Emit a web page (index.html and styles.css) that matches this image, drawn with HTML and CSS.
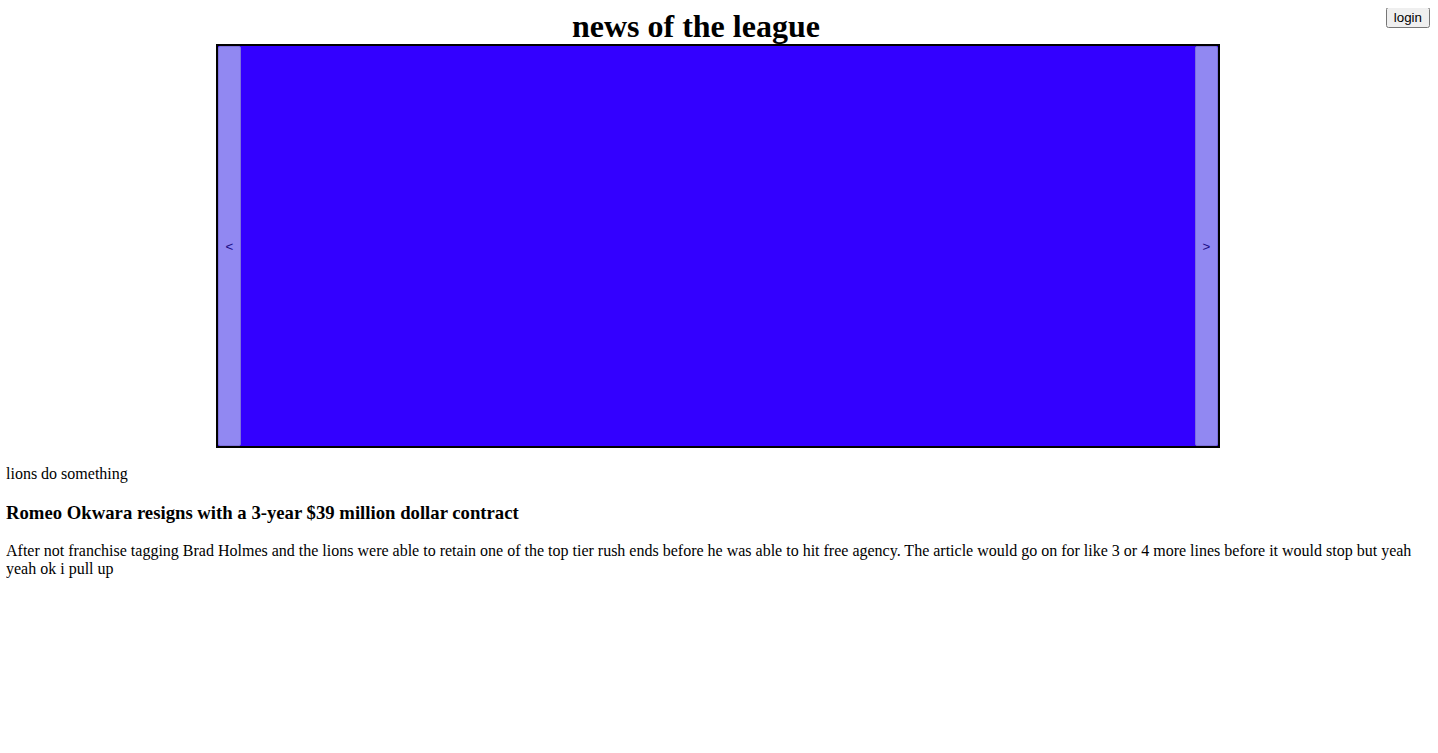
FILE: index.html
```html
<!DOCTYPE html>
<html>
<head>
<meta charset="utf-8">
<link rel="stylesheet" href="styles.css">
</head>
<body>
<header class="header">
  <h1 class="title">news of the league</h1>
  <button class="login">login</button>
</header>
<div class="slider">
  <button class="nav">&lt;</button>
  <div class="slide"></div>
  <button class="nav">&gt;</button>
</div>
<p class="text">lions do something</p>
<h3 class="headline">Romeo Okwara resigns with a 3-year $39 million dollar contract</h3>
<p class="text">After not franchise tagging Brad Holmes and the lions were able to retain one of the top tier rush ends before he was able to hit free agency. The article would go on for like 3 or 4 more lines before it would stop but yeah yeah ok i pull up</p>
</body>
</html>
```
FILE: styles.css
```css
body {
  margin: 8px 8px 8px 6px;
  font-family: "Liberation Serif", "Times New Roman", serif;
  color: #000;
  background: #fff;
}
.header {
  display: flex;
  align-items: flex-start;
}
.title {
  flex: 1;
  margin: 0;
  text-align: center;
  font-size: 32px;
  line-height: 36px;
  font-weight: bold;
}
.login {
  margin-top: -1px;
  font-family: "Liberation Sans", Arial, sans-serif;
  font-size: 13.33px;
  padding: 1px 6px;
}
.slider {
  width: 1000px;
  height: 400px;
  margin: 0 auto 17px;
  border: 2px solid #000;
  background: #3300ff;
  display: flex;
}
.slide {
  flex: 1;
}
.nav {
  width: 23px;
  padding: 0;
  background: #9188f2;
  border: 1px solid #7d70dc;
  border-radius: 2px;
  color: #1c0e86;
  font-family: "Liberation Sans", Arial, sans-serif;
  font-size: 13.33px;
}
.text {
  margin: 16px 0;
  font-size: 16px;
}
.headline {
  font-size: 18.72px;
  margin: 18.72px 0;
}
```
